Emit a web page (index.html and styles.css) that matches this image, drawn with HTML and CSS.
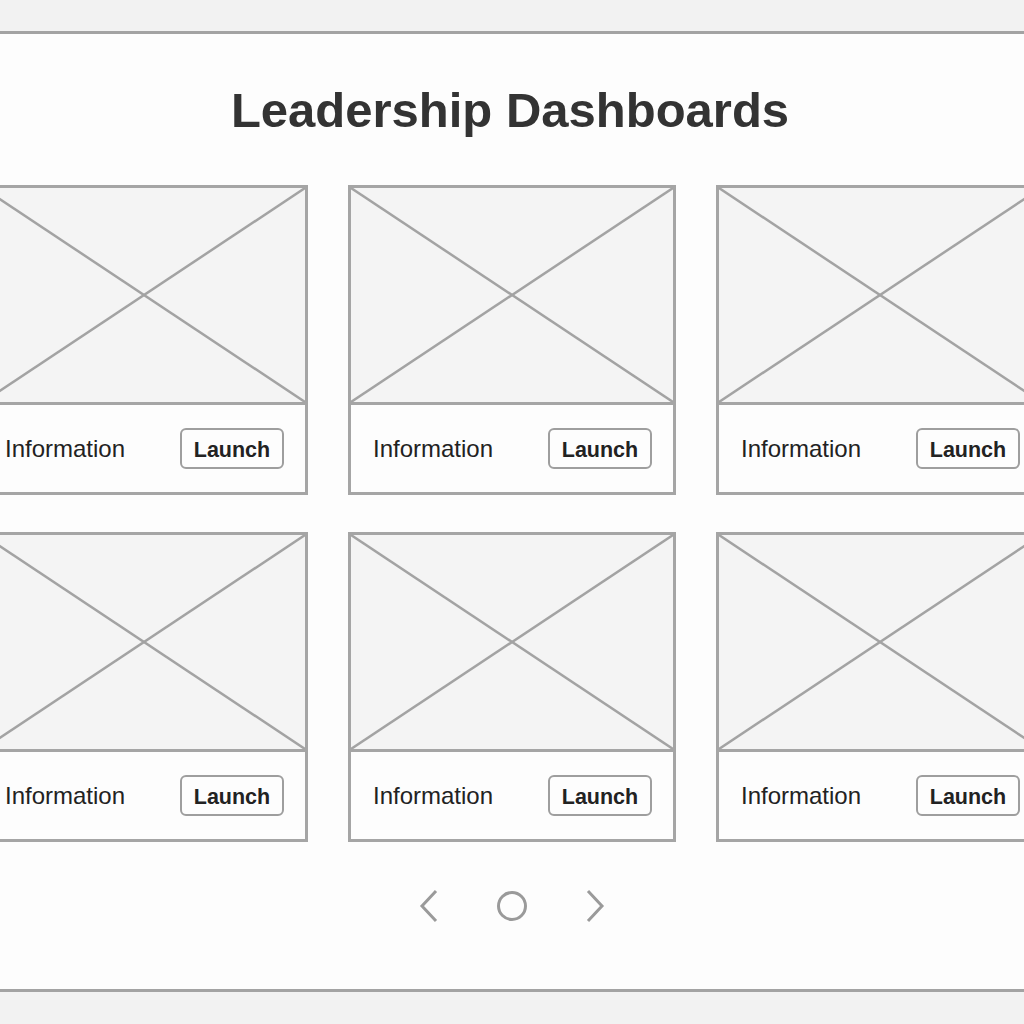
FILE: index.html
```html
<!DOCTYPE html>
<html lang="en">
<head>
<meta charset="utf-8">
<title>Leadership Dashboards</title>
<link rel="stylesheet" href="styles.css">
</head>
<body>
<div class="topband"></div>
<main class="panel">
  <h1 class="title">Leadership Dashboards</h1>
  <div class="grid">
    <div class="card">
      <div class="thumb"><svg viewBox="0 0 100 100" preserveAspectRatio="none"><line x1="0" y1="0" x2="100" y2="100"/><line x1="100" y1="0" x2="0" y2="100"/></svg></div>
      <div class="info"><span class="label">Information</span><button class="btn">Launch</button></div>
    </div>
    <div class="card">
      <div class="thumb"><svg viewBox="0 0 100 100" preserveAspectRatio="none"><line x1="0" y1="0" x2="100" y2="100"/><line x1="100" y1="0" x2="0" y2="100"/></svg></div>
      <div class="info"><span class="label">Information</span><button class="btn">Launch</button></div>
    </div>
    <div class="card">
      <div class="thumb"><svg viewBox="0 0 100 100" preserveAspectRatio="none"><line x1="0" y1="0" x2="100" y2="100"/><line x1="100" y1="0" x2="0" y2="100"/></svg></div>
      <div class="info"><span class="label">Information</span><button class="btn">Launch</button></div>
    </div>
    <div class="card">
      <div class="thumb"><svg viewBox="0 0 100 100" preserveAspectRatio="none"><line x1="0" y1="0" x2="100" y2="100"/><line x1="100" y1="0" x2="0" y2="100"/></svg></div>
      <div class="info"><span class="label">Information</span><button class="btn">Launch</button></div>
    </div>
    <div class="card">
      <div class="thumb"><svg viewBox="0 0 100 100" preserveAspectRatio="none"><line x1="0" y1="0" x2="100" y2="100"/><line x1="100" y1="0" x2="0" y2="100"/></svg></div>
      <div class="info"><span class="label">Information</span><button class="btn">Launch</button></div>
    </div>
    <div class="card">
      <div class="thumb"><svg viewBox="0 0 100 100" preserveAspectRatio="none"><line x1="0" y1="0" x2="100" y2="100"/><line x1="100" y1="0" x2="0" y2="100"/></svg></div>
      <div class="info"><span class="label">Information</span><button class="btn">Launch</button></div>
    </div>
  </div>
  <nav class="pager">
    <svg class="chev" width="20" height="34" viewBox="0 0 20 34"><polyline points="17,2 3,17 17,32"/></svg>
    <svg class="dot" width="32" height="32" viewBox="0 0 32 32"><circle cx="16" cy="16" r="13.5"/></svg>
    <svg class="chev" width="20" height="34" viewBox="0 0 20 34"><polyline points="3,2 17,17 3,32"/></svg>
  </nav>
</main>
</body>
</html>
```

FILE: styles.css
```css
html, body {
  margin: 0;
  padding: 0;
  background: #f2f2f2;
  overflow: hidden;
  font-family: "Liberation Sans", Arial, sans-serif;
}

.topband {
  height: 31px;
}

.panel {
  background: #fdfdfd;
  border-top: 3px solid #a3a3a3;
  border-bottom: 3px solid #a3a3a3;
  padding: 52px 0 66px;
  overflow: hidden;
}

.title {
  margin: 0 0 0 -4px;
  text-align: center;
  font-size: 49px;
  line-height: 49px;
  font-weight: bold;
  color: #333333;
}

.grid {
  margin-top: 50px;
  width: 1064px;
  margin-left: calc(50% - 532px);
  display: grid;
  grid-template-columns: repeat(3, 328px);
  column-gap: 40px;
  row-gap: 37px;
}

.card {
  border: 3px solid #a5a5a5;
  background: #fdfdfd;
  display: flex;
  flex-direction: column;
}

.thumb {
  height: 214px;
  background: #f4f4f4;
  border-bottom: 3px solid #a5a5a5;
}

.thumb svg {
  display: block;
  width: 100%;
  height: 100%;
}

.thumb line {
  stroke: #a3a3a3;
  stroke-width: 2.5;
  vector-effect: non-scaling-stroke;
}

.info {
  height: 87px;
  display: flex;
  align-items: center;
  justify-content: space-between;
  padding: 0 21px 0 22px;
}

.label {
  font-size: 24px;
  color: #222222;
}

.btn {
  width: 104px;
  height: 41px;
  border: 2.5px solid #9e9e9e;
  border-radius: 6px;
  background: #fdfdfd;
  font-family: "Liberation Sans", Arial, sans-serif;
  font-weight: bold;
  font-size: 21.5px;
  color: #222222;
  padding: 3px 0 0;
}

.pager {
  margin-top: 47px;
  display: flex;
  justify-content: center;
  align-items: center;
  gap: 57px;
}

.pager svg {
  display: block;
}

.chev polyline {
  fill: none;
  stroke: #9a9a9a;
  stroke-width: 3;
}

.dot circle {
  fill: none;
  stroke: #9a9a9a;
  stroke-width: 3;
}
```
